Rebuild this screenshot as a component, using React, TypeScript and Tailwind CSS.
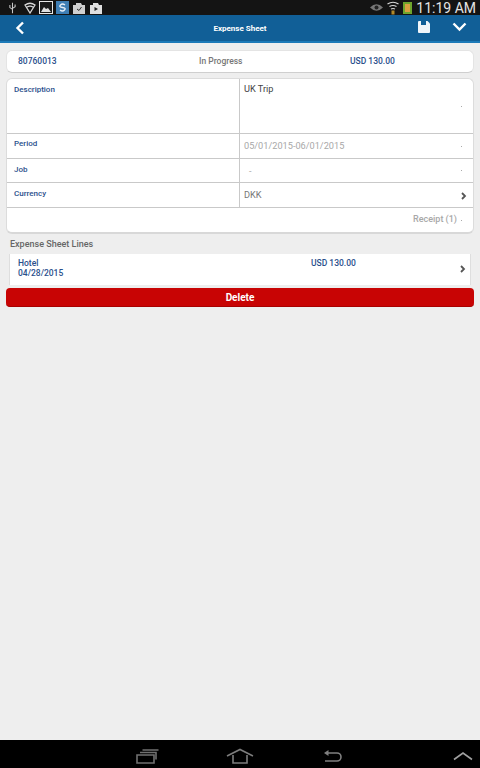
const NAVY = 'text-[#2a4f8c]';

function StatusBar() {
  return (
    <div className="h-[15px] bg-[#141414] flex items-center justify-between pl-[9px] pr-[4px] shrink-0">
      <div className="flex items-center">
        {/* usb */}
        <svg width="7" height="12" viewBox="0 0 8 12" fill="none" stroke="#c8c8c8" strokeWidth="1.2">
          <path d="M4 0v12M1 2.500v3l3 2M7 2v2.500l-3 2" />
        </svg>
        {/* wifi shield */}
        <svg className="ml-[8px]" width="12" height="12" viewBox="0 0 12 12" fill="none" stroke="#d8d8d8" strokeWidth="1.3">
          <path d="M1 3q5-3.500 10 0l-5 8zM3 5q3-1.600 6 0" />
        </svg>
        <svg className="ml-[3px]" width="14" height="13" viewBox="0 0 14 13">
          <rect x="0.500" y="0.500" width="13" height="12" fill="#1a1a1a" stroke="#e8e8e8" />
          <path d="M2 11l3-5 2 2 2-1 3 4z" fill="#e0e0e0" />
        </svg>
        <div className="ml-[3px] w-[13px] h-[13px] bg-[#3f7fb5] flex items-center justify-center">
          <svg width="9" height="9" viewBox="0 0 9 9" fill="none" stroke="#e8f0f8" strokeWidth="1.3">
            <path d="M7 2Q4.500 0 2.500 2T4.500 4.500 6.500 7 2 7" />
          </svg>
        </div>
        <svg className="ml-[4px]" width="12" height="12" viewBox="0 0 12 12">
          <path d="M0 3h3V1h5l1 2h3v9H0z" fill="#d0d0d0" />
          <path d="M4 7l2 1.500L8.500 5" fill="none" stroke="#333" />
        </svg>
        <svg className="ml-[5px]" width="12" height="12" viewBox="0 0 12 12">
          <path d="M0 3h3V1h5l1 2h3v9H0z" fill="#e0e0e0" />
          <path d="M4.500 5v4l3.500-2z" fill="#222" />
        </svg>
      </div>
      <div className="flex items-center gap-[4px]">
        <svg width="13" height="9" viewBox="0 0 13 9">
          <path d="M0 4.500Q6.500-2 13 4.500 6.500 11 0 4.500z" fill="#777" />
          <circle cx="6.500" cy="4.500" r="2" fill="#222" />
        </svg>
        <svg width="12" height="14" viewBox="0 0 12 14" fill="none" stroke="#d8d8d8" strokeWidth="1.2">
          <path d="M0.500 3q5.500-3.500 11 0M2.500 5.500q3.500-2 7 0M4 8q2-1 4 0" />
          <rect x="4.500" y="9.500" width="3" height="4" fill="#b08a2a" stroke="none" />
        </svg>
        <div className="w-[9px] h-[12px] bg-[#6ea52d] flex items-center justify-center">
          <div className="w-[5px] h-[8px] bg-[#d9a040]" />
        </div>
        <span className="text-[14px] leading-[14px] text-[#e4e4e4] font-['Roboto',sans-serif]">11:19 AM</span>
      </div>
    </div>
  );
}

function Header() {
  return (
    <div className="h-[28px] bg-[#115f97] border-b-[2px] border-[#1c7ab8] relative flex items-center justify-between pl-[15px] pr-[13px] shrink-0">
      <svg width="10" height="14" viewBox="0 0 10 14" fill="none" stroke="#fff" strokeWidth="2.400">
        <path d="M8 1.500L2.500 7 8 12.500" />
      </svg>
      <span className="absolute left-0 right-0 top-[7px] text-center text-[8px] leading-[14px] font-bold text-white">Expense Sheet</span>
      <div className="flex items-center gap-[22px] mb-[3px]">
        <svg width="12" height="12" viewBox="0 0 12 12">
          <path d="M1 0h8.500L12 2.500V11a1 1 0 0 1-1 1H1a1 1 0 0 1-1-1V1a1 1 0 0 1 1-1z" fill="#f0f5f9" />
          <rect x="3" y="0" width="5" height="4" fill="#115f97" />
        </svg>
        <svg width="15" height="10" viewBox="0 0 15 10" fill="none" stroke="#fff" strokeWidth="2.400">
          <path d="M1.500 1.500L7.500 7.500 13.500 1.500" />
        </svg>
      </div>
    </div>
  );
}

function Row({ label, labelTop, value, valueClass, dotClass, chevron, height }: {
  label: string;
  labelTop: string;
  value: string;
  valueClass: string;
  dotClass?: string;
  chevron?: boolean;
  height: string;
}) {
  return (
    <div className={`flex ${height} border-b border-[#c9c9c9]`}>
      <div className={`w-[232px] pl-[7px] ${labelTop} text-[8px] leading-[11px] font-medium ${NAVY}`}>{label}</div>
      <div className="flex-1 border-l border-[#c9c9c9] pl-[4px] relative">
        <div className={valueClass}>{value}</div>
        {dotClass && <span className={`absolute right-[11px] ${dotClass} w-px h-px bg-[#aaa]`} />}
        {chevron && (
          <svg className="absolute right-[6px] top-[9px]" width="6" height="8" viewBox="0 0 6 8" fill="none" stroke="#555" strokeWidth="1.800">
            <path d="M1 1l3 3-3 3" />
          </svg>
        )}
      </div>
    </div>
  );
}

export default function App() {
  return (
    <div className="w-[480px] h-[768px] bg-[#eeeeee] flex flex-col font-['Roboto',sans-serif] overflow-hidden">
      <StatusBar />
      <Header />
      <div className="flex-1 px-[6px]">
        {/* summary */}
        <div className="mt-[7px] h-[23px] bg-white rounded-[6px] border border-[#e4e4e4] border-b-[#cfcfcf] flex items-center text-[8.5px] font-medium pl-[11px]">
          <span className={`w-[181px] ${NAVY}`}>80760013</span>
          <span className="w-[151px] text-[#777]">In Progress</span>
          <span className={NAVY}>USD 130.00</span>
        </div>

        {/* details */}
        <div className="mt-[5px] bg-white rounded-[6px] border border-[#dcdcdc] border-b-[#d8d8d8] border-b-[2px] overflow-hidden">
          <Row label="Description" labelTop="pt-[5px]" value="UK Trip" valueClass="pt-[4px] text-[9.2px] leading-[12px] text-[#444]" dotClass="top-[27px]" height="h-[55px]" />
          <Row label="Period" labelTop="pt-[4px]" value="05/01/2015-06/01/2015" valueClass="pt-[6px] text-[9.2px] leading-[12px] text-[#a8a8a8]" dotClass="top-[12px]" height="h-[25px]" />
          <Row label="Job" labelTop="pt-[5px]" value="-" valueClass="pl-[5px] pt-[6px] text-[9px] leading-[12px] text-[#a8a8a8]" dotClass="top-[11px]" height="h-[24px]" />
          <Row label="Currency" labelTop="pt-[5px]" value="DKK" valueClass="pt-[6px] text-[9.2px] leading-[12px] text-[#777]" chevron height="h-[25px]" />
          <div className="h-[24px] flex items-center justify-end pr-[11px] text-[9px] font-medium text-[#a8a8a8]">
            <span>Receipt (1)</span>
            <span className="ml-[4px] w-px h-px bg-[#aaa]" />
          </div>
        </div>

        <div className="mt-[4px] ml-[4px] text-[9px] leading-[12px] font-medium text-[#666]">Expense Sheet Lines</div>

        {/* line item */}
        <div className={`mt-[4px] mx-[3px] h-[31px] bg-white border-x border-[#dedede] relative pl-[8px] pt-[4px] text-[8.5px] leading-[10px] font-medium ${NAVY}`}>
          <div className="flex">
            <span className="w-[293px]">Hotel</span>
            <span>USD 130.00</span>
          </div>
          <div>04/28/2015</div>
          <svg className="absolute right-[4px] top-[11px]" width="6" height="8" viewBox="0 0 6 8" fill="none" stroke="#555" strokeWidth="1.800">
            <path d="M1 1l3 3-3 3" />
          </svg>
        </div>

        <button className="mt-[3px] w-full h-[19px] bg-[#c80404] rounded-[4px] border-b border-[#a80000] text-white text-[10px] font-bold flex items-center justify-center">
          Delete
        </button>
      </div>

      {/* nav bar */}
      <div className="h-[28px] bg-black shrink-0 flex items-center pl-[136px] pt-[4px]">
        <svg width="24" height="15" viewBox="0 0 24 15" fill="none" stroke="#707070" strokeWidth="1.600">
          <path d="M1 6h17v8H1zM4 3.500h16v7M6.500 1h16" />
        </svg>
        <svg className="ml-[66px]" width="28" height="16" viewBox="0 0 28 16" fill="none" stroke="#7c7c7c" strokeWidth="1.600">
          <path d="M1 8L14 1.500 27 8M7 7v8h14V7" />
        </svg>
        <svg className="ml-[68px]" width="20" height="14" viewBox="0 0 20 14" fill="none" stroke="#808080" strokeWidth="1.600">
          <path d="M5 4h10a4 4 0 0 1 0 8H3" />
          <path d="M6.500 1L2 4l4.500 3z" fill="#808080" stroke="none" />
        </svg>
        <svg className="ml-[111px]" width="20" height="10" viewBox="0 0 20 10" fill="none" stroke="#a0a0a0" strokeWidth="1.600">
          <path d="M1 8.500L10 2l9 6.500" />
        </svg>
      </div>
    </div>
  );
}
